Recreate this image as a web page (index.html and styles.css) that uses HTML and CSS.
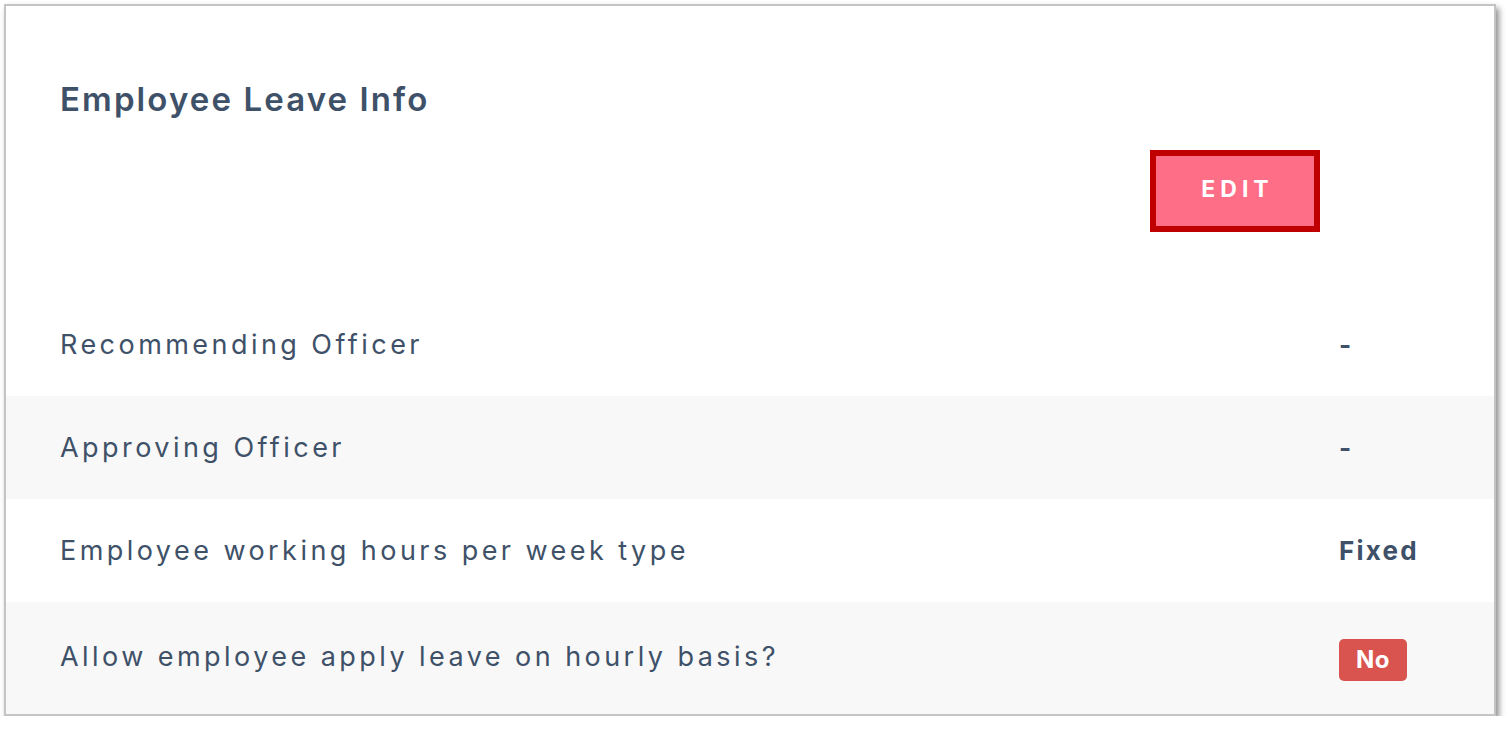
FILE: index.html
```html
<!DOCTYPE html>
<html>
<head>
<meta charset="utf-8">
<link rel="stylesheet" href="styles.css">
</head>
<body>
<div class="card">
  <div class="header">
    <h1 class="title">Employee Leave Info</h1>
    <div class="actions">
      <button class="edit-btn">EDIT</button>
    </div>
  </div>
  <div class="rows">
    <div class="row">
      <div class="label">Recommending Officer</div>
      <div class="value">-</div>
    </div>
    <div class="row alt">
      <div class="label">Approving Officer</div>
      <div class="value">-</div>
    </div>
    <div class="row">
      <div class="label">Employee working hours per week type</div>
      <div class="value">Fixed</div>
    </div>
    <div class="row alt last">
      <div class="label">Allow employee apply leave on hourly basis?</div>
      <div class="value"><span class="badge">No</span></div>
    </div>
  </div>
</div>
</body>
</html>
```

FILE: styles.css
```css
* { box-sizing: border-box; }
html, body { margin: 0; padding: 0; background: #ffffff; }
body {
  font-family: "Inter", "Noto Sans", sans-serif;
  color: #3e5168;
}
.card {
  margin: 4px 0 0 4px;
  width: 1492px;
  height: 712px;
  border: 2px solid #c4c4c4;
  background: #ffffff;
  box-shadow: 3px 4px 6px rgba(0,0,0,0.45);
  display: flex;
  flex-direction: column;
}
.header {
  padding: 0 0 0 54px;
  height: 287px;
}
.title {
  margin: 0;
  padding-top: 73px;
  font-size: 33px;
  line-height: 40px;
  font-weight: 600;
  letter-spacing: 2.1px;
  color: #3e5168;
}
.actions {
  display: flex;
  justify-content: flex-end;
  padding-right: 174px;
  margin-top: 31px;
}
.edit-btn {
  width: 170px;
  height: 82px;
  background: #ff6e87;
  border: 6px solid #c00000;
  color: #ffffff;
  font-family: "Inter", "Noto Sans", sans-serif;
  font-weight: 700;
  font-size: 23px;
  letter-spacing: 5px;
  padding: 0 0 4px 5px;
}
.rows {
  flex: 1;
  display: flex;
  flex-direction: column;
}
.row {
  display: grid;
  grid-template-columns: 1fr 155px;
  align-items: center;
  height: 103px;
  padding-left: 54px;
}
.row.alt { background: #f8f8f8; }
.row.last { flex: 1; }
.row.last .label { padding-bottom: 4px; }
.label {
  font-size: 27px;
  font-weight: 400;
  letter-spacing: 3.45px;
}
.value {
  font-size: 26px;
  font-weight: 700;
  letter-spacing: 2.2px;
}
.badge {
  display: inline-block;
  width: 68px;
  height: 42px;
  line-height: 42px;
  margin-top: 4px;
  text-align: center;
  background: #d9534f;
  color: #ffffff;
  border-radius: 5px;
  font-size: 24px;
  font-weight: 700;
  letter-spacing: 0.5px;
}
```
